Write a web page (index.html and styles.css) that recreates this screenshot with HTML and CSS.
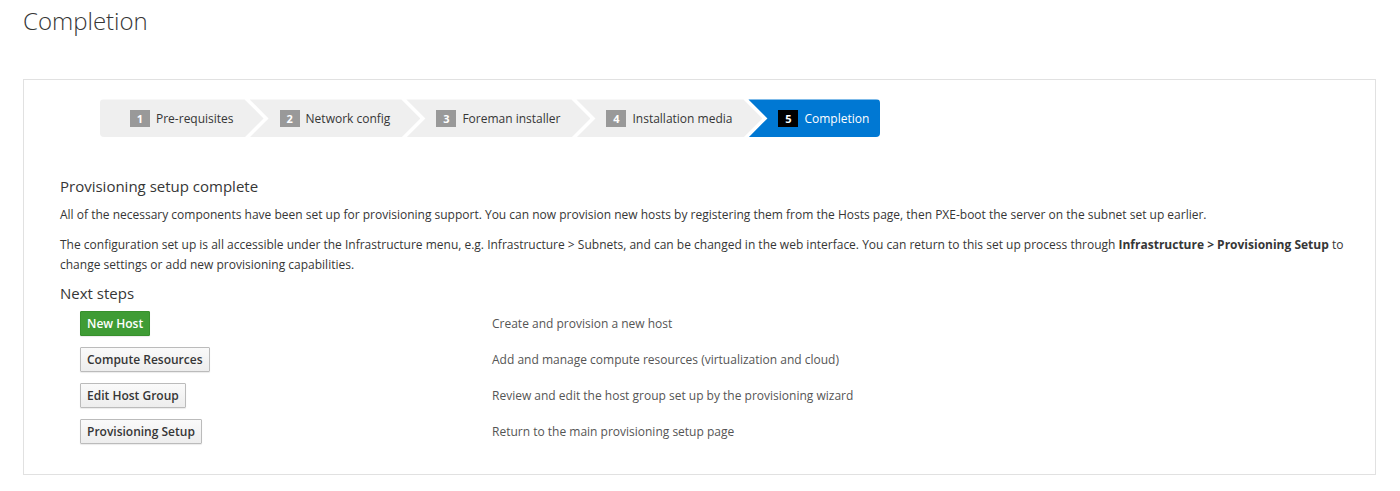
FILE: index.html
```html
<!DOCTYPE html>
<html>
<head>
<meta charset="utf-8">
<link rel="stylesheet" href="styles.css">
</head>
<body>
<h1 class="page-title">Completion</h1>
<div class="panel">
  <div class="wizard">
    <div class="step step-first"><span class="num">1</span><span class="label">Pre-requisites</span></div>
    <div class="step"><span class="num">2</span><span class="label">Network config</span></div>
    <div class="step"><span class="num">3</span><span class="label">Foreman installer</span></div>
    <div class="step"><span class="num">4</span><span class="label">Installation media</span></div>
    <div class="step step-last step-active"><span class="num">5</span><span class="label">Completion</span></div>
  </div>
  <h2 class="section-title">Provisioning setup complete</h2>
  <p class="para">All of the necessary components have been set up for provisioning support. You can now provision new hosts by registering them from the Hosts page, then PXE-boot the server on the subnet set up earlier.</p>
  <p class="para">The configuration set up is all accessible under the Infrastructure menu, e.g. Infrastructure &gt; Subnets, and can be changed in the web interface. You can return to this set up process through <strong>Infrastructure &gt; Provisioning Setup</strong> to change settings or add new provisioning capabilities.</p>
  <h2 class="section-title next-title">Next steps</h2>
  <div class="steps-grid">
    <div class="cell"><a class="btn btn-success">New Host</a></div>
    <div class="desc">Create and provision a new host</div>
    <div class="cell"><a class="btn">Compute Resources</a></div>
    <div class="desc">Add and manage compute resources (virtualization and cloud)</div>
    <div class="cell"><a class="btn">Edit Host Group</a></div>
    <div class="desc">Review and edit the host group set up by the provisioning wizard</div>
    <div class="cell"><a class="btn">Provisioning Setup</a></div>
    <div class="desc">Return to the main provisioning setup page</div>
  </div>
</div>
</body>
</html>
```
FILE: styles.css
```css
html, body {
  margin: 0;
  padding: 0;
  background: #fff;
}
body {
  font-family: "Open Sans", "Liberation Sans", sans-serif;
  color: #363636;
  font-size: 12px;
}
.page-title {
  font-weight: 300;
  font-size: 24px;
  line-height: 1.1;
  margin: 8px 0 0 23px;
  color: #363636;
}
.panel {
  margin: 45px 24px 0 23px;
  border: 1px solid #e1e1e1;
  padding: 19px 20px 30px 36px;
}
.wizard {
  display: flex;
  margin-left: 40px;
  height: 38px;
}
.step {
  display: flex;
  align-items: center;
  height: 38px;
  background: #efefef;
  padding: 0 30px 0 30px;
  margin-left: -14px;
  clip-path: polygon(0 0, calc(100% - 19px) 0, 100% 50%, calc(100% - 19px) 100%, 0 100%, 19px 50%);
  font-size: 12px;
  color: #363636;
  white-space: nowrap;
}
.step-first {
  margin-left: 0;
  border-radius: 4px 0 0 4px;
  clip-path: polygon(0 0, calc(100% - 19px) 0, 100% 50%, calc(100% - 19px) 100%, 0 100%);
}
.step-last {
  padding-right: 11px;
  border-radius: 0 4px 4px 0;
  clip-path: polygon(0 0, 100% 0, 100% 100%, 0 100%, 19px 50%);
}
.step-active {
  background: #0078d3;
  color: #fff;
}
.num {
  display: inline-flex;
  align-items: center;
  justify-content: center;
  width: 20px;
  height: 17px;
  background: #999;
  color: #fff;
  font-weight: 700;
  font-size: 11px;
  margin-right: 6px;
}
.step-active .num {
  background: #000;
}
.section-title {
  font-size: 15px;
  font-weight: 400;
  line-height: 1.1;
  margin: 41px 0 0 0;
  color: #363636;
}
.para {
  margin: 10px 0 0 0;
  line-height: 20px;
  font-size: 12px;
}
.para strong {
  font-weight: 700;
}
.next-title {
  margin-top: 10px;
}
.steps-grid {
  display: grid;
  grid-template-columns: 412px 1fr;
  row-gap: 11px;
  align-items: center;
  margin: 10px 0 0 20px;
}
.btn {
  display: inline-block;
  font-size: 12px;
  font-weight: 600;
  line-height: 19px;
  padding: 2px 6px;
  border: 1px solid #bbb;
  border-radius: 1px;
  background: linear-gradient(#fafafa, #ededed);
  color: #363636;
  box-shadow: 0 1px 1px rgba(3, 3, 3, 0.08);
  cursor: pointer;
}
.btn-success {
  background: #3f9c35;
  border-color: #37902d;
  color: #fff;
}
.desc {
  color: #555;
  font-size: 12px;
  line-height: 20px;
}
```
